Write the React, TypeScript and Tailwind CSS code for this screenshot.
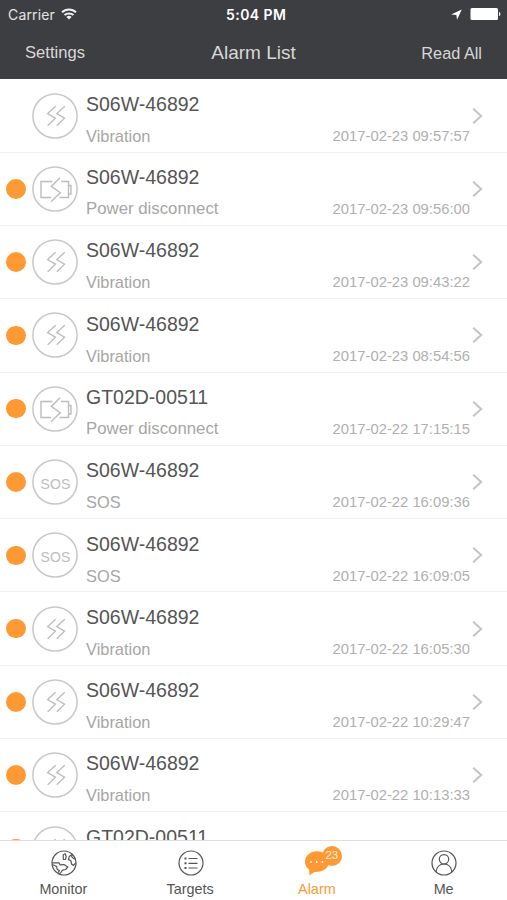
import { ReactNode, useState } from 'react';
import clsx from 'clsx';

type AlarmType = 'Vibration' | 'Power disconnect' | 'SOS';

interface Alarm {
    id: number;
    device: string;
    type: AlarmType;
    time?: string;
    unread: boolean;
}

const ALARMS: Alarm[] = [
    { id: 1, device: 'S06W-46892', type: 'Vibration', time: '2017-02-23 09:57:57', unread: false },
    { id: 2, device: 'S06W-46892', type: 'Power disconnect', time: '2017-02-23 09:56:00', unread: true },
    { id: 3, device: 'S06W-46892', type: 'Vibration', time: '2017-02-23 09:43:22', unread: true },
    { id: 4, device: 'S06W-46892', type: 'Vibration', time: '2017-02-23 08:54:56', unread: true },
    { id: 5, device: 'GT02D-00511', type: 'Power disconnect', time: '2017-02-22 17:15:15', unread: true },
    { id: 6, device: 'S06W-46892', type: 'SOS', time: '2017-02-22 16:09:36', unread: true },
    { id: 7, device: 'S06W-46892', type: 'SOS', time: '2017-02-22 16:09:05', unread: true },
    { id: 8, device: 'S06W-46892', type: 'Vibration', time: '2017-02-22 16:05:30', unread: true },
    { id: 9, device: 'S06W-46892', type: 'Vibration', time: '2017-02-22 10:29:47', unread: true },
    { id: 10, device: 'S06W-46892', type: 'Vibration', time: '2017-02-22 10:13:33', unread: true },
    { id: 11, device: 'GT02D-00511', type: 'Vibration', unread: true },
];

function AlarmIcon({ type }: { type: AlarmType }) {
    return (
        <div className="relative flex size-[46px] shrink-0 items-center justify-center text-[#bdbdbd]">
            <svg className="absolute inset-0 size-[46px]" viewBox="0 0 46 46" fill="none" stroke="#c8c8c8" strokeWidth="1.5">
                <circle cx="23" cy="23" r="22.1" />
            </svg>
            {type === 'SOS' && (
                <span className="pt-[3px] pl-px text-[14px] leading-none tracking-[0.2px]">SOS</span>
            )}
            {type === 'Vibration' && (
                <svg className="size-[46px] shrink-0" viewBox="0 0 46 46" fill="none" stroke="currentColor" strokeWidth="1.4">
                    <path d="M23.6 13.2 15.7 20.6 23.4 25.2 15.7 32.7" />
                    <path d="M32.8 13.2 24.8 20.6 32.5 25.2 24.8 32.7" />
                </svg>
            )}
            {type === 'Power disconnect' && (
                <svg className="size-[46px] shrink-0" viewBox="0 0 46 46" fill="none" stroke="currentColor" strokeWidth="1.4">
                    <path d="M20.5 15.5H9V31.5H19" />
                    <path d="M29 15.5H36.5V31.5H27.5" />
                    <path d="M36.5 19.5H39V28H36.5" />
                    <path d="M28 11.8 19.3 20.4 28.3 26.8 19 35.8" />
                </svg>
            )}
        </div>
    );
}

function AlarmRow({ alarm }: { alarm: Alarm }) {
    return (
        <li className="flex h-[73.3px] shrink-0 border-b border-[#f0f0f0] pl-1.5">
            <div className="flex w-[26px] shrink-0 items-center">
                {alarm.unread && <span className="size-[19.5px] rounded-full bg-[#ff9933]" />}
            </div>
            <div className="flex items-center">
                <AlarmIcon type={alarm.type} />
            </div>
            <div className="flex min-w-0 flex-1 flex-col pt-[12.4px] pl-2">
                <span className="text-[19.5px] leading-6 text-[#555555]">{alarm.device}</span>
                {alarm.time && (
                    <div className="flex items-center justify-between pt-2">
                        <span
                            className={clsx(
                                'leading-6 text-[#a6a6a6]',
                                alarm.type === 'Power disconnect' ? 'text-[16.8px]' : 'text-[16.4px]'
                            )}
                        >
                            {alarm.type}
                        </span>
                        <span className="text-[14.8px] leading-6 text-[#b0b0b0]">{alarm.time}</span>
                    </div>
                )}
            </div>
            <div className="flex w-[37px] shrink-0 items-center">
                <svg className="ml-0.5 h-[18px] w-3" viewBox="0 0 12 18" fill="none" stroke="#c3c3c3" strokeWidth="1.9">
                    <path d="M1.2 1.8 9.2 9 1.2 16.2" />
                </svg>
            </div>
        </li>
    );
}

function StatusBar() {
    return (
        <div className="flex h-7 items-center px-2 font-['Inter',sans-serif] text-white">
            <div className="flex w-[218px] items-center gap-1.5">
                <span className="text-[14px] tracking-[0.15px] text-[#e4e4e4]">Carrier</span>
                <svg className="h-3 w-4" viewBox="0 0 16 12" fill="none" stroke="#f0f0f0" strokeWidth="2">
                    <path d="M1 4.3C5 .4 11 .4 15 4.3" />
                    <path d="M3.5 7.1C6 4.8 10 4.8 12.5 7.1" />
                    <path d="M8 11.6 5.4 8.9C6.9 7.5 9.1 7.5 10.6 8.9Z" fill="#f0f0f0" stroke="none" />
                </svg>
            </div>
            <span className="text-[14px] font-semibold tracking-[0.45px]">5:04 PM</span>
            <div className="flex flex-1 items-center justify-end gap-2">
                <svg className="h-[11px] w-[11px]" viewBox="0 0 11 11" fill="#fff">
                    <path d="M10.8.5.2 5.6 5.4 6 6 10.8Z" />
                </svg>
                <svg className="-mr-0.5 h-3 w-[31px]" viewBox="0 0 31 12" fill="#fff">
                    <rect x="0.5" y="0" width="27.5" height="12" rx="1.5" />
                    <path d="M29 3.8C31 4.6 31 7.4 29 8.2Z" />
                </svg>
            </div>
        </div>
    );
}

function MonitorIcon() {
    return (
        <svg className="ml-px size-[26px]" viewBox="0 0 26 26" fill="none" stroke="currentColor" strokeWidth="1.2" strokeLinejoin="round">
            <circle cx="13" cy="13" r="12" />
            <path d="M1.2 12.8H8L9 14.8 13 14.6 16.8 17 14.6 19.5 11.5 20.2 9.5 23 7.5 23.6" />
            <path d="M1.3 14.5 5.6 16.5 6.2 19.5 8.5 20.5 7 22.6" />
            <path d="M12.2 4.8 14.2 3.8 15.2 6.5 14.5 9.3 12.4 9.5Z" />
            <path d="M21.3 4.6 18.4 6.2 17.4 9.6 20 10.8 20.5 14 22.4 15.4 24.8 13" />
            <path d="M21.3 4.6 20.6 6.6 22.4 8.4 24.2 8.8" />
        </svg>
    );
}

function TargetsIcon() {
    return (
        <svg className="ml-px size-[26px]" viewBox="0 0 26 26" fill="none" stroke="currentColor" strokeWidth="1.2">
            <circle cx="13" cy="13" r="12" />
            <path d="M10.5 8.5h9M10.5 13.3h9M10.5 18h9" />
            <path d="M6.5 8.5h2M6.5 13.3h2M6.5 18h2" strokeWidth="2" />
        </svg>
    );
}

function MessageIcon() {
    return (
        <svg className="size-[26px]" viewBox="0 0 26 26" fill="currentColor">
            <path d="M13 1.3C6.3 1.3 1 5.7 1 11.6 1 15.1 2.6 17.8 5.1 19.7L5.4 25.2 10.6 22C19.3 22.4 25 18 25 11.6 25 5.7 19.7 1.3 13 1.3Z" />
            <circle cx="7" cy="12" r="0.9" fill="#fff" />
            <circle cx="12.7" cy="12" r="0.9" fill="#fff" />
            <circle cx="18.4" cy="12" r="0.9" fill="#fff" />
        </svg>
    );
}

function MeIcon() {
    return (
        <svg className="size-[26px]" viewBox="0 0 26 26" fill="none" stroke="currentColor" strokeWidth="1.2">
            <circle cx="13" cy="13" r="12" />
            <circle cx="13" cy="9.3" r="4.7" />
            <path d="M5 22C5.8 16.8 8.8 14 13 14S20.2 16.8 21 22" />
        </svg>
    );
}

interface TabProps {
    label: string;
    icon: ReactNode;
    active: boolean;
    badge?: number;
    onSelect: () => void;
}

function Tab({ label, icon, active, badge, onSelect }: TabProps) {
    return (
        <button
            onClick={onSelect}
            className={clsx('flex flex-1 flex-col items-center pt-[9px]', active ? 'text-[#ff9933]' : 'text-[#555555]')}
        >
            <span className="relative">
                {icon}
                {badge !== undefined && (
                    <span className="absolute -top-1 left-[18px] flex h-5 w-5 items-center justify-center rounded-full bg-[#ff9933] text-[11.5px] leading-none text-white/85">
                        {badge}
                    </span>
                )}
            </span>
            <span className="pt-1 text-[14.4px] leading-[18px]">{label}</span>
        </button>
    );
}

export default function App() {
    const [alarms, setAlarms] = useState(ALARMS);
    const [tab, setTab] = useState('Alarm');

    const handleReadAll = () => {
        setAlarms(alarms.map((alarm) => ({ ...alarm, unread: false })));
    };

    return (
        <div className="flex h-[900px] w-[507px] flex-col overflow-hidden bg-white font-['Liberation_Sans',Arial,sans-serif]">
            <header className="h-[79px] shrink-0 bg-[#3d3e41]">
                <StatusBar />
                <nav className="flex h-[51px] items-center justify-between px-[25px] text-[#d8d8d8]">
                    <button className="flex-1 text-left text-[16.6px]">Settings</button>
                    <h1 className="text-[19px]">Alarm List</h1>
                    <button onClick={handleReadAll} className="flex-1 text-right text-[16.3px]">
                        Read All
                    </button>
                </nav>
            </header>
            <ul className="flex min-h-0 flex-1 flex-col overflow-hidden pt-[0.4px]">
                {alarms.map((alarm) => (
                    <AlarmRow key={alarm.id} alarm={alarm} />
                ))}
            </ul>
            <footer className="flex h-[60px] shrink-0 border-t border-[#dedede] bg-white">
                <Tab label="Monitor" icon={<MonitorIcon />} active={tab === 'Monitor'} onSelect={() => setTab('Monitor')} />
                <Tab label="Targets" icon={<TargetsIcon />} active={tab === 'Targets'} onSelect={() => setTab('Targets')} />
                <Tab label="Alarm" icon={<MessageIcon />} badge={23} active={tab === 'Alarm'} onSelect={() => setTab('Alarm')} />
                <Tab label="Me" icon={<MeIcon />} active={tab === 'Me'} onSelect={() => setTab('Me')} />
            </footer>
        </div>
    );
}
